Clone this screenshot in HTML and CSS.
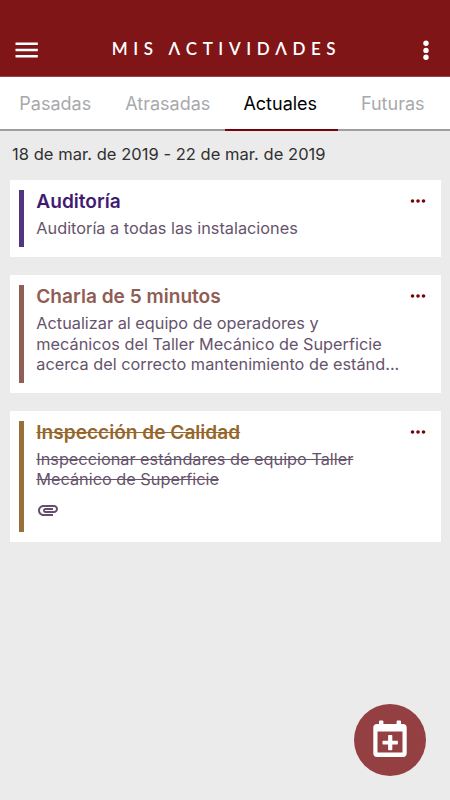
FILE: index.html
```html
<!DOCTYPE html>
<html lang="es">
<head>
    <meta charset="UTF-8">
    <meta name="viewport" content="width=device-width, initial-scale=1.0">
    <title>Mis Actividades</title>
    <link rel="stylesheet" href="styles.css">
</head>
<body>
    <header class="header">
        <button class="icon-button" aria-label="Menú">
            <svg width="24" height="16" viewBox="0 0 24 16" fill="#fff"><path d="M.5.5h22.3V3H.5zM.5 6.7h22.3v2.5H.5zM.5 13h22.3v2.5H.5z"/></svg>
        </button>
        <h1 class="title" aria-label="Mis Actividades">MIS ΛCTIVIDΛDES</h1>
        <button class="icon-button" aria-label="Más opciones">
            <svg width="6" height="20" viewBox="0 0 6 20" fill="#fff"><circle cx="3" cy="3.2" r="2.7"/><circle cx="3" cy="10.4" r="2.7"/><circle cx="3" cy="17.3" r="2.7"/></svg>
        </button>
    </header>

    <nav class="tabs">
        <button class="tab">Pasadas</button>
        <button class="tab">Atrasadas</button>
        <button class="tab active">Actuales</button>
        <button class="tab">Futuras</button>
    </nav>

    <main class="content">
        <div class="date-range">18 de mar. de 2019 - 22 de mar. de 2019</div>

        <article class="card audit">
            <div class="card-body">
                <h2 class="card-title">Auditoría</h2>
                <p class="card-text">Auditoría a todas las instalaciones</p>
            </div>
            <button class="more" aria-label="Opciones">
                <svg width="16" height="6" viewBox="0 0 16 6" fill="#780209"><circle cx="2.5" cy="3" r="1.8"/><circle cx="8" cy="3" r="1.8"/><circle cx="13.5" cy="3" r="1.8"/></svg>
            </button>
        </article>

        <article class="card talk">
            <div class="card-body">
                <h2 class="card-title">Charla de 5 minutos</h2>
                <p class="card-text">Actualizar al equipo de operadores y<br>mecánicos del Taller Mecánico de Superficie<br>acerca del correcto mantenimiento de estánd...</p>
            </div>
            <button class="more" aria-label="Opciones">
                <svg width="16" height="6" viewBox="0 0 16 6" fill="#780209"><circle cx="2.5" cy="3" r="1.8"/><circle cx="8" cy="3" r="1.8"/><circle cx="13.5" cy="3" r="1.8"/></svg>
            </button>
        </article>

        <article class="card inspection done">
            <div class="card-body">
                <h2 class="card-title">Inspección de Calidad</h2>
                <p class="card-text">Inspeccionar estándares de equipo Taller<br>Mecánico de Superficie</p>
                <svg class="attachment" width="24" height="24" viewBox="0 0 24 24" fill="#664f6e"><path d="M2 12.5C2 9.46 4.46 7 7.5 7H18c2.21 0 4 1.79 4 4s-1.79 4-4 4H9.5C8.12 15 7 13.88 7 12.5S8.12 10 9.5 10H17v2H9.41c-.55 0-.55 1 0 1H18c1.1 0 2-.9 2-2s-.9-2-2-2H7.5C5.57 9 4 10.57 4 12.5S5.57 16 7.5 16H17v2H7.5C4.46 18 2 15.54 2 12.5z"/></svg>
            </div>
            <button class="more" aria-label="Opciones">
                <svg width="16" height="6" viewBox="0 0 16 6" fill="#780209"><circle cx="2.5" cy="3" r="1.8"/><circle cx="8" cy="3" r="1.8"/><circle cx="13.5" cy="3" r="1.8"/></svg>
            </button>
        </article>
    </main>

    <button class="fab" aria-label="Agregar actividad">
        <svg width="34" height="38" viewBox="0 0 34 38" fill="#fff">
            <path fill-rule="evenodd" d="M6 1.5Q6 .5 7 .5h2.4q1 0 1 1V4h13.2V1.5q0-1 1-1H27q1 0 1 1V4h2q3.7 0 3.7 3.7v25.6q0 3.7-3.7 3.7H4Q.3 37 .3 33.3V7.7Q.3 4 4 4h2zM4.5 11.5v21h25v-21z"/>
            <path d="M15.8 15h2.8q.7 0 .7.7v5h4.9q.7 0 .7.7v2.4q0 .7-.7.7h-4.9v5q0 .7-.7.7h-2.8q-.7 0-.7-.7v-5h-4.9q-.7 0-.7-.7v-2.4q0-.7.7-.7h4.9v-5q0-.7.7-.7z"/>
        </svg>
    </button>
</body>
</html>
```
FILE: styles.css
```css
* {
    box-sizing: border-box;
}

body {
    margin: 0;
    height: 100vh;
    overflow: hidden;
    font-family: Inter, "Liberation Sans", sans-serif;
    background: #ebebeb;
}

button {
    padding: 0;
    border: none;
    background: none;
    font-family: inherit;
    cursor: pointer;
}

svg {
    display: block;
}

.header {
    display: flex;
    justify-content: space-between;
    align-items: center;
    height: 77px;
    padding: 23px 21px 0 15px;
    background: #801518;
    border-bottom: 1px solid #8e4a4c;
}

.title {
    margin: 0;
    padding: 0 9px 2px 0;
    font-family: Lato, sans-serif;
    font-size: 17px;
    font-weight: 600;
    line-height: 20px;
    letter-spacing: 5.6px;
    white-space: nowrap;
    color: #fff;
}

.tabs {
    display: grid;
    grid-template-columns: repeat(4, 1fr);
    height: 54px;
    background: #fff;
}

.tab {
    padding-right: 2px;
    border-bottom: 2px solid #9b9fa2;
    font-size: 18px;
    color: #a8a9ac;
}

.tab.active {
    border-color: #780209;
    color: #000;
}

.content {
    display: flex;
    flex-direction: column;
    padding: 0 9.5px;
}

.date-range {
    height: 49px;
    padding: 12px 2.5px 0;
    font-size: 16.5px;
    line-height: 22px;
    letter-spacing: 0.04px;
    color: #303030;
}

.card {
    display: flex;
    justify-content: space-between;
    align-items: flex-start;
    margin-bottom: 18px;
    padding: 10px 15px 10px 9.5px;
    background: #fff;
}

.card-body {
    border-left: 5px solid;
    padding: 0 0 9.1px 12.3px;
}

.card-title {
    margin: -1px 0 0;
    font-size: 19.1px;
    font-weight: 600;
    line-height: 24px;
}

.card-text {
    margin: 5px 0 0;
    font-size: 16.3px;
    line-height: 20.2px;
    color: #66536c;
    white-space: nowrap;
}

.audit .card-body {
    border-color: #50357f;
}

.audit .card-title {
    color: #411b73;
}

.talk .card-body {
    border-color: #8f5e55;
}

.talk .card-title {
    color: #905d53;
}

.inspection .card-body {
    border-color: #98703a;
}

.inspection .card-title {
    color: #96672c;
}

.done .card-title,
.done .card-text {
    text-decoration: line-through;
    text-decoration-thickness: 1px;
}

.attachment {
    margin: 9px 0 0.7px -0.5px;
}

.more {
    margin-top: 7.5px;
}

.fab {
    position: fixed;
    right: 24px;
    bottom: 24px;
    display: flex;
    justify-content: center;
    align-items: center;
    width: 72px;
    height: 72px;
    padding-bottom: 3px;
    border-radius: 50%;
    background: #944043;
}
```
